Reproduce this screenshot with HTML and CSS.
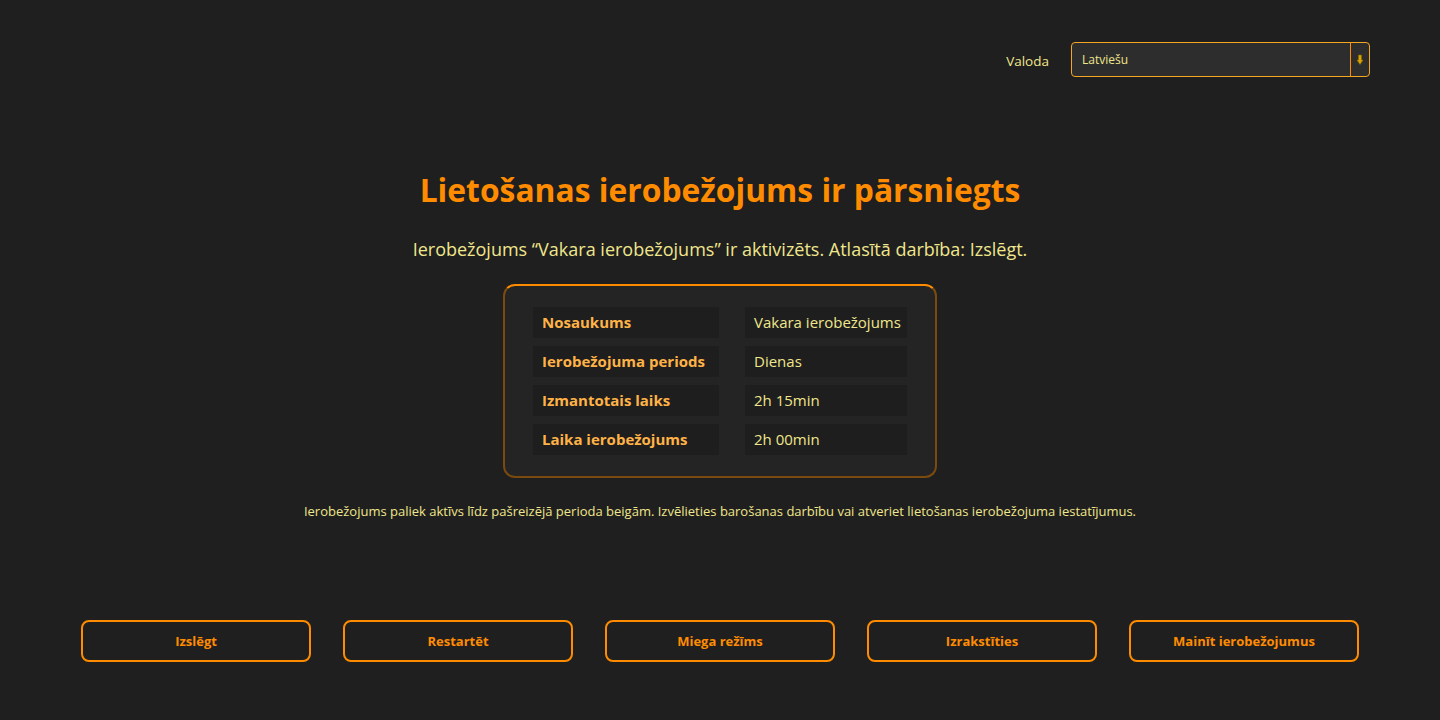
FILE: index.html
```
<!DOCTYPE html>
<html lang="lv">
<head>
  <meta charset="UTF-8">
  <title>Lietošanas ierobežojums</title>
  <meta name="viewport" content="width=device-width, initial-scale=1.0">
  <link rel="stylesheet" href="styles.css">
</head>
<body>

  <div class="topbar">
    <label for="lang">Valoda</label>
    <div class="select">
      <span class="select-value" id="lang">Latviešu</span>
      <span class="select-arrow">
        <svg width="8" height="12" viewBox="0 0 8 12">
          <path d="M2.5 1h3v5h1.5L4 10.5 1 6h1.5z" fill="#d9a400" stroke="#8a6a00" stroke-width="0.6"/>
        </svg>
      </span>
    </div>
  </div>

  <div class="main">
    <h1>Lietošanas ierobežojums ir pārsniegts</h1>
    <p class="subtitle">Ierobežojums “Vakara ierobežojums” ir aktivizēts. Atlasītā darbība: Izslēgt.</p>

    <div class="card">
      <div class="row"><div class="key">Nosaukums</div><div class="val">Vakara ierobežojums</div></div>
      <div class="row"><div class="key">Ierobežojuma periods</div><div class="val">Dienas</div></div>
      <div class="row"><div class="key">Izmantotais laiks</div><div class="val">2h 15min</div></div>
      <div class="row"><div class="key">Laika ierobežojums</div><div class="val">2h 00min</div></div>
    </div>

    <p class="note">Ierobežojums paliek aktīvs līdz pašreizējā perioda beigām. Izvēlieties barošanas darbību vai atveriet lietošanas ierobežojuma iestatījumus.</p>
  </div>

  <div class="actions">
    <button>Izslēgt</button>
    <button>Restartēt</button>
    <button>Miega režīms</button>
    <button>Izrakstīties</button>
    <button>Mainīt ierobežojumus</button>
  </div>

</body>
</html>
```

FILE: styles.css
```
body {
  margin: 0;
  padding: 0;
  height: 720px;
  background: #1f1f1f;
  font-family: "Open Sans", "Noto Sans", sans-serif;
  color: #f0e68c;
  display: flex;
  flex-direction: column;
}

.topbar {
  display: flex;
  justify-content: flex-end;
  align-items: center;
  gap: 22px;
  padding: 42px 70px 0 0;
}

.topbar label {
  font-size: 13.5px;
  color: #f0e68c;
  margin-top: 2px;
}

.select {
  width: 299px;
  height: 35px;
  box-sizing: border-box;
  border: 1px solid #f5a623;
  border-radius: 4px;
  background: #2d2d2d;
  display: flex;
  align-items: center;
}

.select-value {
  flex: 1;
  font-size: 12px;
  padding-left: 10px;
}

.select-arrow {
  width: 18px;
  height: 100%;
  border-left: 1px solid #ff8c00;
  display: flex;
  align-items: center;
  justify-content: center;
}

.main {
  display: flex;
  flex-direction: column;
  align-items: center;
  margin-top: 91px;
}

h1 {
  margin: 0;
  font-size: 31.8px;
  font-weight: 700;
  color: #ff8c00;
}

.subtitle {
  margin: 26px 0 0;
  font-size: 18px;
}

.card {
  margin-top: 23px;
  width: 434px;
  box-sizing: border-box;
  padding: 21px 28px;
  background: #242424;
  border: 2px solid #7a4a0f;
  border-top-color: #ff8c00;
  border-radius: 12px;
  display: flex;
  flex-direction: column;
  gap: 8px;
}

.row {
  display: grid;
  grid-template-columns: 186px 162px;
  justify-content: space-between;
}

.key,
.val {
  background: #1e1e1e;
  height: 31px;
  line-height: 31px;
  padding: 0 9px;
  font-size: 15px;
  white-space: nowrap;
}

.key {
  color: #ffb347;
  font-weight: 700;
}

.val {
  color: #f0e68c;
}

.note {
  margin: 24px 0 0;
  font-size: 13px;
}

.actions {
  margin-top: auto;
  margin-bottom: 58px;
  display: flex;
  justify-content: center;
  gap: 32px;
}

button {
  width: 230px;
  height: 42px;
  background: transparent;
  border: 2px solid #ff8c00;
  border-radius: 8px;
  color: #ff8c00;
  font-family: "Open Sans", "Noto Sans", sans-serif;
  font-size: 13px;
  font-weight: 700;
  cursor: pointer;
}

button:hover {
  background: #2a2a2a;
}
```
